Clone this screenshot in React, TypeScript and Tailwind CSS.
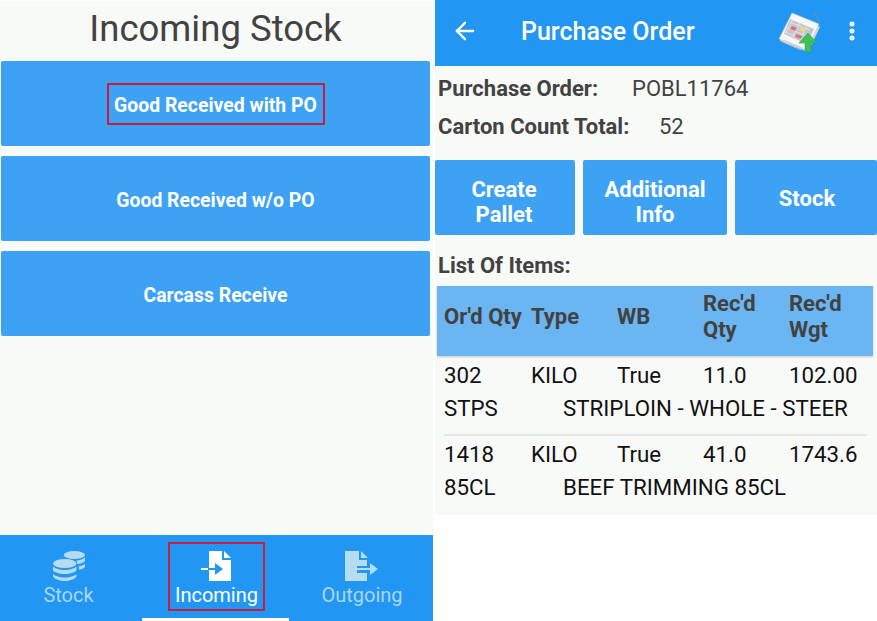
import { ArrowLeft, EllipsisVertical } from 'lucide-react'

const PANEL_BG = 'bg-[#f8faf8]'

// ── Tab icons ─────────────────────────────────────────────────────────────────

function CoinsIcon() {
  return (
    <svg width="32" height="30" viewBox="0 0 30 30" preserveAspectRatio="none" fill="#b5dcf0">
      <ellipse cx="20" cy="4" rx="10" ry="4" />
      <path d="M22 9.500c3.500-.3 6.500-1.400 8-3V10c-1 1.500-4 2.800-7 3zM24 15.500c2.500-.5 4.800-1.400 6-2.700V16c-.8 1.200-3 2.300-5.500 2.800z" />
      <ellipse cx="11" cy="12.500" rx="11" ry="4.500" />
      <path d="M0 15.500c2 2.200 6.500 3.500 11 3.500s9-1.300 11-3.500v4c-2 2.200-6.500 3.500-11 3.500S2 21.700 0 19.500z" />
      <path d="M0 23c2 2.200 6.500 3.500 11 3.500s9-1.300 11-3.500v2.500c-2 2.900-6.500 4.500-11 4.500S2 28.400 0 25.500z" />
    </svg>
  )
}

function IncomingIcon() {
  return (
    <svg width="30" height="30" viewBox="0 0 30 30" className="mr-[2px]">
      <path d="M8 0h13v9h9v21H8z" fill="#fff" />
      <path d="M23 0l7 7h-7z" fill="#fff" />
      <path d="M0 17h7v2H0z" fill="#fff" />
      <path d="M8 17h6v-5l8 6-8 6v-5H8z" fill="#2196f3" />
    </svg>
  )
}

function OutgoingIcon() {
  return (
    <svg width="33" height="30" viewBox="0 0 33 30" fill="#b5dcf0">
      <path d="M0 0h14v9h8v6H12v7h10v8H0z" />
      <path d="M16 0l7 7h-7z" />
      <path d="M12 17h13v2H12z" />
      <path d="M25 12l8 6-8 6z" />
    </svg>
  )
}

function OrderUploadIcon() {
  return (
    <svg width="44" height="42" viewBox="0 0 44 42">
      <path d="M2 29L14 4l28 11-12 25z" fill="#d3d7d7" />
      <path d="M1 27L14 1l27 11-12 26z" fill="#f8f8f6" stroke="#c4c8c8" strokeWidth="0.6" />
      <path d="M12 7l24 10-7 15-23-10z" fill="#c3c5d2" />
      <path d="M12 10l20 8M9 16l20 8M7 20l20 8M15 7l-7 14M22 10l-7 15M29 13l-7 15" stroke="#e9e9ee" strokeWidth="0.8" />
      <path d="M14 14l5 2-2 3-5-2z" fill="#e0726e" />
      <path d="M22 14l6 2-2 4-5-2z" fill="#e6d98a" />
      <path d="M18 22l6 2-1 3-6-2z" fill="#e0726e" />
      <path d="M6 28l18 8M5 30l18 8" stroke="#c9cccc" strokeWidth="0.8" />
      <path d="M36 3a3 3 0 0 1 3 5" fill="none" stroke="#8a8f92" strokeWidth="1" />
      <path d="M30 21l9 10h-6v9h-6v-9h-6z" fill="#3fc05a" stroke="#2f9e47" strokeWidth="0.5" />
    </svg>
  )
}

// ── Left panel ────────────────────────────────────────────────────────────────

function MenuButton({ label, outlined = false }: { label: string; outlined?: boolean }) {
  return (
    <button
      type="button"
      className="ml-px mr-[3px] flex h-[85px] items-center justify-center rounded-[2px] bg-[#3ea2f4] text-[19.4px] font-bold text-white"
    >
      {outlined ? (
        <span className="flex h-[42px] w-[218px] items-center justify-center border-2 border-[#c81e3c] pt-[5px]">
          {label}
        </span>
      ) : (
        <span className="pt-[5px]">{label}</span>
      )}
    </button>
  )
}

function IncomingStock() {
  return (
    <div className={`${PANEL_BG} mt-[2px] flex h-[619px] w-[433px] shrink-0 flex-col`}>
      <h1 className="mt-[3px] h-[56px] pr-[2px] text-center text-[36.5px] leading-[48px] text-[#424242]">
        Incoming Stock
      </h1>
      <div className="flex flex-col gap-[10px]">
        <MenuButton label="Good Received with PO" outlined />
        <MenuButton label="Good Received w/o PO" />
        <MenuButton label="Carcass Receive" />
      </div>

      <nav className="mt-auto flex h-[86px] bg-[#2196f3]">
        <div className="flex w-[142px] flex-col items-center pt-[16px] pr-[5px] text-[20px] leading-[24px] text-[#a9d6f3]">
          <CoinsIcon />
          <span className="mt-[2px]">Stock</span>
        </div>
        <div className="flex w-[147px] flex-col items-center border-b-[3px] border-white pt-[7px] pl-[2px]">
          <div className="flex h-[69px] w-[97px] flex-col items-center border-2 border-[#c81e3c] pt-[7px] text-[20px] leading-[24px] text-white">
            <IncomingIcon />
            <span className="mt-[2px]">Incoming</span>
          </div>
        </div>
        <div className="flex flex-1 flex-col items-center pt-[16px] text-[20px] leading-[24px] text-[#a9d6f3]">
          <OutgoingIcon />
          <span className="mt-[2px] ml-[2px]">Outgoing</span>
        </div>
      </nav>
    </div>
  )
}

// ── Right panel ───────────────────────────────────────────────────────────────

const ITEMS = [
  { qty: '302', type: 'KILO', wb: 'True', recQty: '11.0', recWgt: '102.00', code: 'STPS', name: 'STRIPLOIN - WHOLE - STEER' },
  { qty: '1418', type: 'KILO', wb: 'True', recQty: '41.0', recWgt: '1743.6', code: '85CL', name: 'BEEF TRIMMING 85CL' },
]

function ActionButton({ children, className }: { children: React.ReactNode; className: string }) {
  return (
    <button
      type="button"
      className={`flex h-[75px] items-center justify-center rounded-[2px] bg-[#3ea2f4] text-center text-[22px] leading-[25px] font-bold text-white ${className}`}
    >
      {children}
    </button>
  )
}

function PurchaseOrder() {
  return (
    <div className={`${PANEL_BG} ml-[2px] flex h-[515px] flex-1 flex-col self-start`}>
      <header className="flex h-[66px] shrink-0 items-center bg-[#2196f3] text-white">
        <ArrowLeft size={28} strokeWidth={2} className="mb-[4px] ml-[16px]" />
        <span className="mb-[2px] ml-[42px] text-[25px] font-medium">Purchase Order</span>
        <div className="ml-auto flex items-center">
          <OrderUploadIcon />
          <EllipsisVertical size={24} strokeWidth={3} className="mr-[13px] mb-[4px] ml-[18px]" />
        </div>
      </header>

      <div className="pl-[3px] text-[22px] leading-[38px] text-[#424242]">
        <div className="mt-[4px] flex">
          <span className="w-[194px] font-bold">Purchase Order:</span>
          <span>POBL11764</span>
        </div>
        <div className="flex">
          <span className="w-[221px] font-bold">Carton Count Total:</span>
          <span>52</span>
        </div>
      </div>

      <div className="mt-[14px] flex gap-[8px]">
        <ActionButton className="w-[140px] pt-[8px] pr-[2px]">
          Create
          <br />
          Pallet
        </ActionButton>
        <ActionButton className="w-[144px] pt-[8px]">
          Additional
          <br />
          Info
        </ActionButton>
        <ActionButton className="flex-1 pt-[2px] pl-[2px]">Stock</ActionButton>
      </div>

      <div className="mt-[16px] pl-[3px] text-[22px] leading-[30px] font-bold text-[#424242]">List Of Items:</div>

      <div className="mt-[5px] mr-[4px] ml-[2px] grid h-[70px] grid-cols-[87px_86px_86px_86px_1fr] items-center bg-[#6bb5f2] pb-[8px] pl-[7px] text-[22px] leading-[26px] font-bold text-[#424242] shadow-[0_1px_2px_rgba(0,0,0,0.2)]">
        <span className="whitespace-nowrap">Or'd Qty</span>
        <span>Type</span>
        <span>WB</span>
        <span>
          Rec'd
          <br />
          Qty
        </span>
        <span>
          Rec'd
          <br />
          Wgt
        </span>
      </div>

      <div className="mt-[3px] mr-[10px] ml-[9px] text-[22.3px] leading-[33px] text-[#111]">
        {ITEMS.map((item, i) => (
          <div key={item.code} className={i > 0 ? 'mt-[9px] border-t-2 border-[#e6e8e6] pt-[2px]' : ''}>
            <div className="grid grid-cols-[87px_86px_86px_86px_1fr]">
              <span>{item.qty}</span>
              <span>{item.type}</span>
              <span>{item.wb}</span>
              <span>{item.recQty}</span>
              <span>{item.recWgt}</span>
            </div>
            <div className="flex">
              <span className="w-[119px]">{item.code}</span>
              <span className="whitespace-nowrap">{item.name}</span>
            </div>
          </div>
        ))}
      </div>
    </div>
  )
}

export default function App() {
  return (
    <main className="flex min-h-[621px] bg-white font-['Roboto',sans-serif]">
      <IncomingStock />
      <PurchaseOrder />
    </main>
  )
}
